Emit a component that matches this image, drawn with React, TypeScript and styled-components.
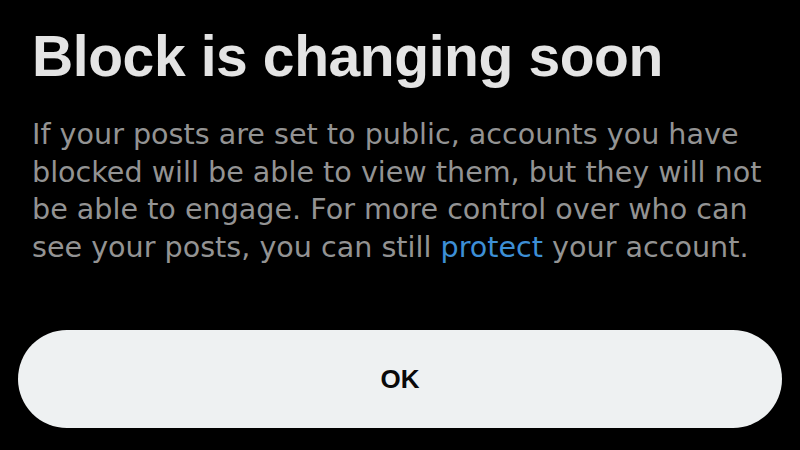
import styled, { createGlobalStyle } from "styled-components";

const Global = createGlobalStyle`
  html, body {
    margin: 0;
    padding: 0;
    background: #000;
  }
  body {
    font-family: "Liberation Sans", Arial, sans-serif;
  }
`;

const Screen = styled.main`
  width: 800px;
  height: 450px;
  background: #000;
  display: flex;
  flex-direction: column;
  box-sizing: border-box;
  padding: 18px 18px 0 18px;
  overflow: hidden;
`;

const Content = styled.div`
  padding: 0 14px;
`;

const Title = styled.h1`
  margin: 0;
  font-size: 57px;
  font-weight: 700;
  line-height: 76px;
  color: #e4e4e4;
  letter-spacing: -0.4px;
  white-space: nowrap;
`;

const Body = styled.p`
  margin: 22px 0 0 0;
  font-family: "DejaVu Sans", "Liberation Sans", sans-serif;
  font-size: 28.6px;
  line-height: 37.5px;
  color: #939393;
  white-space: nowrap;
`;

const Link = styled.span`
  color: #3d8fd6;
`;

const OkButton = styled.button`
  margin-top: 64px;
  height: 98px;
  width: 764px;
  border: none;
  border-radius: 49px;
  background: #eef1f2;
  color: #0a0a0a;
  font-family: "Liberation Sans", Arial, sans-serif;
  font-weight: 700;
  font-size: 26px;
  display: flex;
  align-items: center;
  justify-content: center;
  cursor: pointer;
`;

export default function App() {
  return (
    <>
      <Global />
      <Screen>
        <Content>
          <Title>Block is changing soon</Title>
          <Body>
            If your posts are set to public, accounts you have
            <br />
            blocked will be able to view them, but they will not
            <br />
            be able to engage. For more control over who can
            <br />
            see your posts, you can still <Link>protect</Link> your account.
          </Body>
        </Content>
        <OkButton>OK</OkButton>
      </Screen>
    </>
  );
}
